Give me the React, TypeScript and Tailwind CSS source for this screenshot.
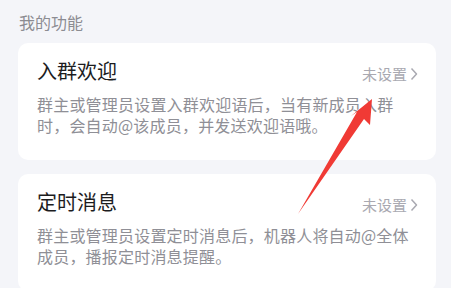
type Feature = {
  title: string;
  desc: string;
};

const features: Feature[] = [
  {
    title: "入群欢迎",
    desc: "群主或管理员设置入群欢迎语后，当有新成员入群\n时，会自动@该成员，并发送欢迎语哦。",
  },
  {
    title: "定时消息",
    desc: "群主或管理员设置定时消息后，机器人将自动@全体\n成员，播报定时消息提醒。",
  },
];

function FeatureCard({ item }: { item: Feature }) {
  return (
    <div className="bg-white rounded-[10px] pl-[19px] pr-[18px] pt-[14px] pb-[25px]">
      <div className="flex items-center justify-between">
        <h5 className="text-[20px] leading-[28px] text-[#1c1c1e]">{item.title}</h5>
        <div className="flex items-center gap-[3px] text-[15px] leading-[20px] text-[#a9a9b1] mt-[5px]">
          <span>未设置</span>
          <svg width="8" height="14" viewBox="0 0 8 14" fill="none">
            <path d="M1.5 1.5 L6.5 7 L1.5 12.5" stroke="#a9a9b1" strokeWidth="1.5" strokeLinejoin="round" />
          </svg>
        </div>
      </div>
      <p className="mt-[9px] whitespace-pre-line text-[16px] leading-[20.5px] tracking-[0.2px] text-[#8f8f96]">
        {item.desc}
      </p>
    </div>
  );
}

export default function App() {
  return (
    <div
      className="relative w-[451px] h-[288px] overflow-hidden bg-[#f4f5f9] px-[15px]"
      style={{ fontFamily: '"Noto Sans CJK SC", "Noto Sans", sans-serif' }}
    >
      <div className="pl-[4px] pt-[12px] pb-[10px] text-[16px] leading-[21px] text-[#8c8c92]">我的功能</div>
      <div className="flex flex-col gap-[14px] pl-[3px] w-[421px]">
        {features.map((f) => (
          <FeatureCard key={f.title} item={f} />
        ))}
      </div>

      {/* red annotation arrow */}
      <svg className="absolute left-0 top-0 pointer-events-none" width="451" height="288" viewBox="0 0 451 288">
        <path d="M372 99 L370 125 L364 119 L298 214 L357 112 L351 116 Z" fill="#f03a35" />
      </svg>
    </div>
  );
}
